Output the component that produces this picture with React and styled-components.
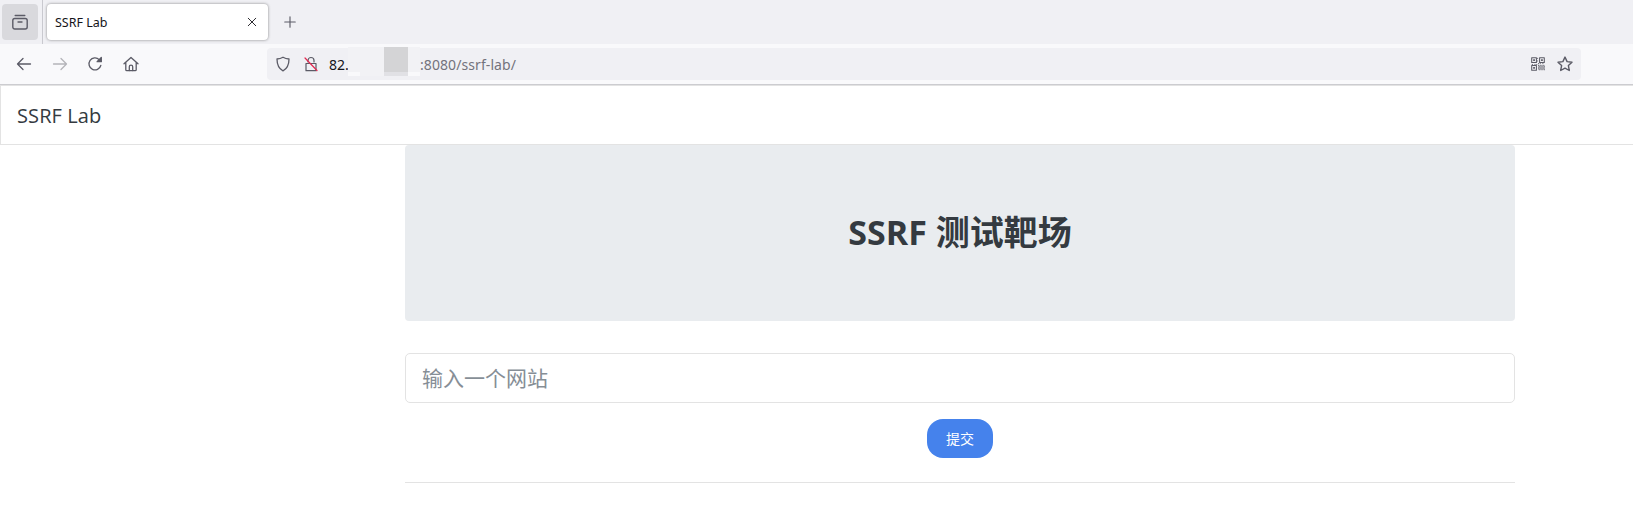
import React from "react";
import styled, { createGlobalStyle } from "styled-components";

const Global = createGlobalStyle`
  html, body { margin: 0; padding: 0; background: #fff; }
  body { width: 1633px; height: 511px; overflow: hidden; font-family: "Open Sans", "Noto Sans CJK SC", sans-serif; }
  * { box-sizing: border-box; }
  input::placeholder { color: #868e96; opacity: 1; }
`;

const TabStrip = styled.div`
  height: 44px;
  background: #f0f0f4;
  display: flex;
  align-items: flex-start;
  padding: 4px 0 0 2px;
`;
const SideButton = styled.div`
  width: 36px;
  height: 36px;
  border-radius: 4px;
  background: #d9d9dd;
  display: flex;
  align-items: center;
  justify-content: center;
  color: #5b5b66;
`;
const Separator = styled.div`
  width: 1px;
  height: 44px;
  margin: -4px 4px 0 4px;
  background: #c9c9cf;
`;
const Tab = styled.div`
  width: 221px;
  height: 36px;
  border-radius: 4px;
  background: #fff;
  box-shadow: 0 0 3px rgba(0, 0, 0, 0.45);
  display: flex;
  align-items: center;
  justify-content: space-between;
  padding: 0 10px 0 8px;
  font-family: "Noto Sans", sans-serif;
  font-size: 12.5px;
  color: #15141a;
`;
const NewTab = styled.div`
  margin: 0 0 0 9px;
  width: 26px;
  height: 36px;
  display: flex;
  align-items: center;
  justify-content: center;
  color: #5b5b66;
`;
const Toolbar = styled.div`
  height: 41px;
  background: #f9f9fb;
  border-bottom: 1px solid #ccccd0;
  display: flex;
  align-items: flex-start;
  padding-top: 4px;
`;
const NavIcons = styled.div`
  width: 267px;
  height: 32px;
  display: flex;
  align-items: center;
  padding-left: 16px;
  gap: 19.5px;
`;
const NavIcon = styled.div`
  width: 16px;
  height: 16px;
  display: flex;
  color: ${(p) => (p.$muted ? "#b4b4b9" : "#5b5b66")};
`;
const UrlBar = styled.div`
  position: relative;
  width: 1314px;
  height: 32px;
  background: #f0f0f4;
  border-radius: 4px;
  display: flex;
  align-items: center;
  padding: 0 8px 0 8px;
  font-family: "Noto Sans", sans-serif;
  font-size: 14px;
  color: #73737c;
`;
const UrlIcon = styled.div`
  width: 16px;
  height: 16px;
  display: flex;
  align-items: center;
  margin-right: ${(p) => p.$gap || 0}px;
  color: #5b5b66;
`;
const Host = styled.span`
  color: #15141a;
  width: 91px;
`;
const Path = styled.span`
  flex: 1;
  letter-spacing: 0.08px;
`;
const Redaction = styled.div`
  position: absolute;
  left: 81px;
  top: -1px;
  width: 72px;
  height: 29px;
  background:
    linear-gradient(#d4d4d6, #d4d4d6) 36px 0 / 24px 25px no-repeat,
    linear-gradient(#e1e1e5, #e1e1e5) 36px 25px / 24px 4px no-repeat,
    linear-gradient(#f9f9fb, #f9f9fb) 0 25px / 12px 4px no-repeat,
    linear-gradient(#f9f9fb, #f9f9fb) 60px 25px / 12px 4px no-repeat,
    #f2f2f5;
`;
const Navbar = styled.header`
  height: 60px;
  border: 1px solid #e3e3e3;
  border-right: 0;
  background: #fff;
  display: flex;
  align-items: center;
  padding: 1px 0 0 16px;
  font-size: 20px;
  letter-spacing: 0.1px;
  color: #343a40;
`;
const Main = styled.main`
  width: 1110px;
  margin-left: 405px;
`;
const Hero = styled.section`
  height: 176px;
  padding-bottom: 5px;
  background: #e9ecef;
  border-radius: 4px;
  display: flex;
  align-items: center;
  justify-content: center;
`;
const Title = styled.h1`
  margin: 0;
  font-size: 34px;
  font-weight: 700;
  color: #343a40;
  font-family: "Open Sans", "Noto Sans CJK SC", sans-serif;
`;
const Field = styled.input`
  display: block;
  width: 100%;
  height: 50px;
  margin-top: 32px;
  padding: 0 16px;
  border: 1px solid #e3e3e3;
  border-radius: 5px;
  background: #fff;
  font-size: 21px;
  font-family: "Open Sans", "Noto Sans CJK SC", sans-serif;
  outline: none;
`;
const Actions = styled.div`
  display: flex;
  justify-content: center;
  margin-top: 16px;
`;
const Submit = styled.button`
  width: 66px;
  height: 39px;
  border: 0;
  border-radius: 16px;
  padding: 0 0 2px;
  background: #4582ec;
  color: #fff;
  font-size: 14px;
  font-family: "Open Sans", "Noto Sans CJK SC", sans-serif;
`;
const Rule = styled.hr`
  margin: 24px 0 0;
  border: 0;
  border-top: 1px solid #e3e3e3;
`;

const Svg = ({ children, size = 16, sw = 1.3 }) => (
  <svg width={size} height={size} viewBox="0 0 16 16" fill="none" stroke="currentColor" strokeWidth={sw} strokeLinecap="round" strokeLinejoin="round">
    {children}
  </svg>
);

const qrCells = [
  [7,1],[7,4],[8,7],[10,7],[13,7],[1,8],[4,8],[6,8],
  [8,9],[10,9],[12,9],[14,9],[9,10],[11,10],[13,10],[15,10],[8,11],[10,11],[12,11],[14,11],
  [9,12],[11,12],[13,12],[15,12],[8,13],[10,13],[12,13],[14,13],[9,14],[11,14],[13,14],[15,14],
];

export default function App() {
  return (
    <>
      <Global />
      <TabStrip>
        <SideButton>
          <Svg sw={1.4}>
            <path d="M3.2 1.5h9.6" />
            <rect x="0.8" y="4.5" width="14.4" height="10.5" rx="2" />
            <path d="M6 8h4" />
          </Svg>
        </SideButton>
        <Separator />
        <Tab>
          <span>SSRF Lab</span>
          <Svg size={12} sw={1.2}>
            <path d="M3 3l10 10M13 3L3 13" />
          </Svg>
        </Tab>
        <NewTab>
          <Svg size={14} sw={1.3}>
            <path d="M8 2v12M2 8h12" />
          </Svg>
        </NewTab>
      </TabStrip>
      <Toolbar>
        <NavIcons>
          <NavIcon>
            <Svg><path d="M1.5 8h13M7 2.5L1.5 8 7 13.5" /></Svg>
          </NavIcon>
          <NavIcon $muted>
            <Svg><path d="M1.5 8h13M9 2.5L14.5 8 9 13.5" /></Svg>
          </NavIcon>
          <NavIcon>
            <Svg><path d="M13.8 9.5A6 6 0 1 1 12.2 3.6L14 5.2" /><path d="M14.3 1.5v4.2h-4.2z" fill="currentColor" /></Svg>
          </NavIcon>
          <NavIcon>
            <Svg><path d="M1 7.8L8 1.4l7 6.4M2.8 6.5v7.2a1 1 0 0 0 1 1h8.4a1 1 0 0 0 1-1V6.5" /><path d="M6.3 14.6v-3.8a1.7 1.7 0 0 1 3.4 0v3.8" /></Svg>
          </NavIcon>
        </NavIcons>
        <UrlBar>
          <UrlIcon $gap={12}>
            <Svg><path d="M8 1.2c2 1.2 4 1.7 6 1.8 0 5.5-1.6 9.6-6 11.8C3.6 12.6 2 8.5 2 3c2-.1 4-.6 6-1.8z" /></Svg>
          </UrlIcon>
          <UrlIcon $gap={10}>
            <Svg sw={1.2}>
              <path d="M5 6V4.5a3 3 0 0 1 6 0V6M3 7.5h10v7.2H3z" />
              <path d="M2 2l12 12.5" stroke="#e22850" />
            </Svg>
          </UrlIcon>
          <Host>82.</Host>
          <Path>:8080/ssrf-lab/</Path>
          <UrlIcon $gap={10}>
            <Svg size={14} sw={1.2}>
              <path d="M0.8 0.8h5.4v5.4H0.8zM9.8 0.8h5.4v5.4H9.8zM0.8 9.8h5.4v5.4H0.8z" />
              <path d="M2.5 2.5h2v2h-2zM11.5 2.5h2v2h-2zM2.5 11.5h2v2h-2z" fill="currentColor" stroke="none" />
              {qrCells.map(([x, y]) => (
                <rect key={`${x}-${y}`} x={x} y={y} width="1.1" height="1.1" fill="currentColor" stroke="none" />
              ))}
            </Svg>
          </UrlIcon>
          <UrlIcon>
            <Svg sw={1.4}><path d="M8 1.1l2.1 4.5 4.9.6-3.6 3.4.9 4.9L8 12.2l-4.3 2.3.9-4.9L1 6.2l4.9-.6z" /></Svg>
          </UrlIcon>
          <Redaction />
        </UrlBar>
      </Toolbar>
      <Navbar>SSRF Lab</Navbar>
      <Main>
        <Hero>
          <Title>SSRF 测试靶场</Title>
        </Hero>
        <Field placeholder="输入一个网站" />
        <Actions>
          <Submit>提交</Submit>
        </Actions>
        <Rule />
      </Main>
    </>
  );
}
